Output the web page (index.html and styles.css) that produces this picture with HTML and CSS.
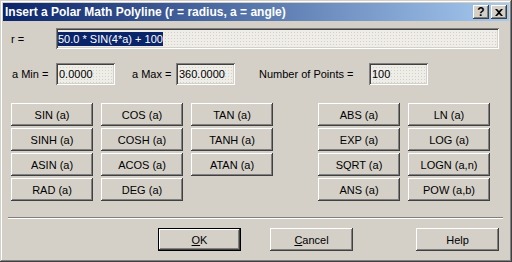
FILE: index.html
```html
<!DOCTYPE html>
<html lang="en">
<head>
    <meta charset="UTF-8" />
    <title>Insert a Polar Math Polyline</title>
    <link rel="stylesheet" href="styles.css">
</head>
<body>
    <div class="dialog">
        <div class="titlebar">
            <span class="title">Insert a Polar Math Polyline (r = radius, a = angle)</span>
            <div class="caption-buttons">
                <span class="cap-btn">?</span>
                <span class="cap-btn cap-close">
                    <svg width="8" height="7" viewBox="0 0 8 7"><path d="M0 0h2l2 2 2-2h2L5 3.5 8 7H6L4 5 2 7H0l3-3.5z" fill="#000"/></svg>
                </span>
            </div>
        </div>
        <div class="content">
            <div class="row-r">
                <label class="lbl-r">r =</label>
                <div class="field field-r"><span class="selected">50.0 * SIN(4*a) + 100</span></div>
            </div>
            <div class="row-range">
                <label class="lbl-min">a Min =</label>
                <div class="field field-small">0.0000</div>
                <label class="lbl-max">a Max =</label>
                <div class="field field-small">360.0000</div>
                <label class="lbl-points">Number of Points =</label>
                <div class="field field-small">100</div>
            </div>
            <div class="functions">
                <div class="fn-group">
                    <button class="btn">SIN (a)</button>
                    <button class="btn">COS (a)</button>
                    <button class="btn">TAN (a)</button>
                    <button class="btn">SINH (a)</button>
                    <button class="btn">COSH (a)</button>
                    <button class="btn">TANH (a)</button>
                    <button class="btn">ASIN (a)</button>
                    <button class="btn">ACOS (a)</button>
                    <button class="btn">ATAN (a)</button>
                    <button class="btn">RAD (a)</button>
                    <button class="btn">DEG (a)</button>
                </div>
                <div class="fn-group fn-right">
                    <button class="btn">ABS (a)</button>
                    <button class="btn">LN (a)</button>
                    <button class="btn">EXP (a)</button>
                    <button class="btn">LOG (a)</button>
                    <button class="btn">SQRT (a)</button>
                    <button class="btn">LOGN (a,n)</button>
                    <button class="btn">ANS (a)</button>
                    <button class="btn">POW (a,b)</button>
                </div>
            </div>
            <div class="separator"></div>
            <div class="actions">
                <button class="btn btn-default btn-ok"><u>O</u>K</button>
                <button class="btn btn-cancel"><u>C</u>ancel</button>
                <button class="btn btn-help">Help</button>
            </div>
        </div>
    </div>
</body>
</html>
```

FILE: styles.css
```css
/* Dialog dasar, gaya Windows klasik */
* {
    box-sizing: border-box;
}
body {
    margin: 0;
    background: #d4d0c8;
    font-family: 'Liberation Sans', Arial, sans-serif;
    font-size: 11px;
    color: #000;
}
.dialog {
    width: 512px;
    height: 262px;
    padding: 3px;
    background: #d4d0c8;
    box-shadow: inset -1px -1px #404040, inset 1px 1px #d4d0c8,
                inset -2px -2px #808080, inset 2px 2px #fff;
}
.titlebar {
    height: 18px;
    display: flex;
    align-items: center;
    justify-content: space-between;
    padding: 0 2px 0 2px;
    background: linear-gradient(to right, #0a246a, #a6caf0);
}
.title {
    color: #fff;
    font-family: 'Liberation Sans', Arial, sans-serif;
    font-weight: bold;
    font-size: 12px;
    white-space: nowrap;
}
.caption-buttons {
    display: flex;
    gap: 2px;
}
.cap-btn {
    width: 16px;
    height: 14px;
    display: flex;
    align-items: center;
    justify-content: center;
    background: #d4d0c8;
    font-family: 'Liberation Sans', Arial, sans-serif;
    font-weight: bold;
    font-size: 12px;
    line-height: 1;
    box-shadow: inset -1px -1px #404040, inset 1px 1px #fff,
                inset -2px -2px #808080, inset 2px 2px #d4d0c8;
}
.content {
    padding: 7px 0 0 8px;
}
.row-r {
    display: flex;
    align-items: center;
}
.lbl-r {
    width: 45px;
}
.field {
    height: 21px;
    display: flex;
    align-items: center;
    padding: 0 3px;
    background-color: #eeede8;
    background-image: radial-gradient(#d4d0c8 0.6px, transparent 0.8px);
    background-size: 3px 3px;
    box-shadow: inset 1px 1px #808080, inset -1px -1px #fff,
                inset 2px 2px #404040, inset -2px -2px #d4d0c8;
}
.field-r {
    width: 443px;
    padding-left: 2px;
}
.selected {
    background: #0a246a;
    color: #fff;
    padding: 1px 0;
}
.row-range {
    display: flex;
    align-items: center;
    margin-top: 14px;
}
.lbl-min {
    width: 45px;
    padding-left: 1px;
}
.field-small {
    width: 59px;
    height: 22px;
}
.lbl-max {
    margin-left: 17px;
    width: 44px;
}
.lbl-points {
    margin-left: 24px;
    width: 110px;
}
/* Tombol fungsi */
.functions {
    display: flex;
    gap: 45px;
    margin-top: 18px;
}
.fn-group {
    display: grid;
    grid-template-columns: repeat(3, 82px);
    grid-auto-rows: 23px;
    column-gap: 8px;
    row-gap: 2px;
}
.fn-right {
    grid-template-columns: repeat(2, 82px);
}
.btn {
    margin: 0;
    padding: 0;
    border: none;
    background: #d4d0c8;
    font-family: 'Liberation Sans', Arial, sans-serif;
    font-size: 11px;
    color: #000;
    box-shadow: inset -1px -1px #404040, inset 1px 1px #fff,
                inset -2px -2px #808080, inset 2px 2px #d4d0c8;
}
.separator {
    width: 495px;
    margin: 16px 0 0 -3px;
    height: 2px;
    border-top: 1px solid #808080;
    border-bottom: 1px solid #fff;
}
.actions {
    display: flex;
    margin-top: 9px;
    height: 23px;
}
.actions .btn {
    width: 83px;
}
.btn-ok {
    margin-left: 147px;
}
.btn-default {
    box-shadow: inset 0 0 0 1px #000, inset -2px -2px #404040, inset 2px 2px #fff,
                inset -3px -3px #808080;
}
.btn-cancel {
    margin-left: 29px;
}
.btn-help {
    margin-left: 63px;
}
```
